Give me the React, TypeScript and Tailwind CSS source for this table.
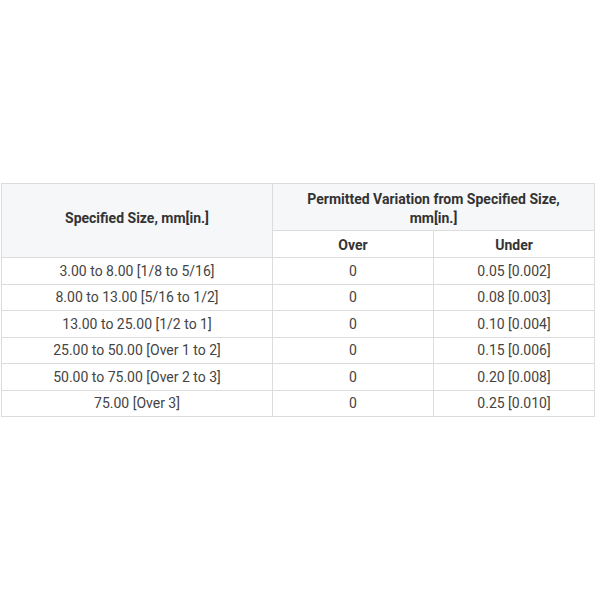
import React from 'react';

const rows = [
    ['3.00 to 8.00 [1/8 to 5/16]', '0', '0.05 [0.002]'],
    ['8.00 to 13.00 [5/16 to 1/2]', '0', '0.08 [0.003]'],
    ['13.00 to 25.00 [1/2 to 1]', '0', '0.10 [0.004]'],
    ['25.00 to 50.00 [Over 1 to 2]', '0', '0.15 [0.006]'],
    ['50.00 to 75.00 [Over 2 to 3]', '0', '0.20 [0.008]'],
    ['75.00 [Over 3]', '0', '0.25 [0.010]'],
];

export default function App() {
    return (
        <div className="min-h-[600px] w-[600px] flex items-center bg-white pl-px" style={{ fontFamily: 'Roboto, "Liberation Sans", sans-serif' }}>
            <table className="w-[593px] border-collapse border border-[#dcdcdc] text-[14px] text-[#444] table-fixed">
                <colgroup>
                    <col className="w-[271px]" />
                    <col className="w-[161px]" />
                    <col className="w-[161px]" />
                </colgroup>
                <thead>
                    <tr className="h-[47px] bg-[#f6f7f9]">
                        <th rowSpan={2} className="border border-[#dcdcdc] font-bold text-[#333] text-center pb-1">
                            Specified Size, mm[in.]
                        </th>
                        <th colSpan={2} className="border border-[#dcdcdc] font-bold text-[#333] text-center leading-[19px] px-6 pt-1">
                            Permitted Variation from Specified Size, mm[in.]
                        </th>
                    </tr>
                    <tr className="h-[27px]">
                        <th className="border border-[#dcdcdc] font-bold text-[#333] bg-white pt-0.5">Over</th>
                        <th className="border border-[#dcdcdc] font-bold text-[#333] bg-white pt-0.5">Under</th>
                    </tr>
                </thead>
                <tbody>
                    {rows.map((r, i) => (
                        <tr key={i} className="h-[26.5px]">
                            {r.map((c, j) => (
                                <td key={j} className="border border-[#dcdcdc] text-center pt-px">{c}</td>
                            ))}
                        </tr>
                    ))}
                </tbody>
            </table>
        </div>
    );
}
